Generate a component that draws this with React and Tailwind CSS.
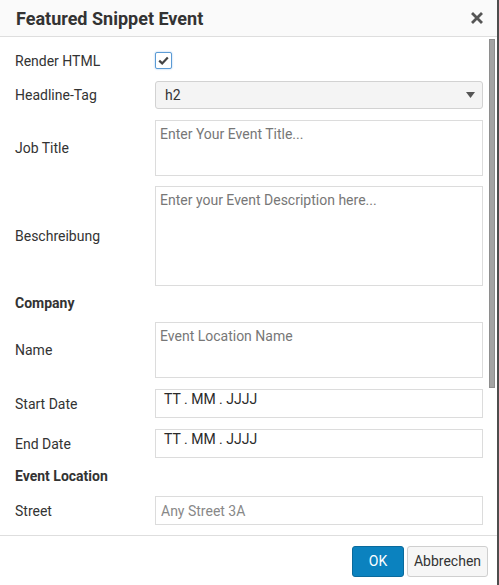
import React from "react";

const FONT = { fontFamily: "Roboto, 'Liberation Sans', sans-serif" };

const Label = ({ children, bold, className = "" }) => (
  <div className={`w-[140px] shrink-0 text-[14px] text-[#333] ${bold ? "font-bold" : ""} ${className}`}>{children}</div>
);

const Row = ({ label, className, labelClass, children }) => (
  <div className={`flex items-center ${className}`}>
    <Label className={labelClass}>{label}</Label>
    {children}
  </div>
);

const textareaCls =
  "w-[328px] resize-none border border-[#dcdcdc] bg-white px-[4px] pt-[4px] text-[14px] leading-[18px] text-[#333] placeholder:text-[#777] outline-none";

const dateCls =
  "h-[29px] w-[328px] border border-[#dcdcdc] bg-white pl-[8px] pt-[1px] text-[14px] leading-[16px] text-[#2a2a2a]";

export default function App() {
  return (
    <div style={FONT} className="flex h-[585px] w-[499px] flex-col overflow-hidden border-r-2 border-[#4d4d4d] bg-white">
      {/* header */}
      <div className="flex h-[37px] shrink-0 items-center justify-between border-b border-[#dedede] bg-[#fafafa] pl-[16px] pr-[14px]">
        <h3 className="text-[18px] font-bold text-[#333]">Featured Snippet Event</h3>
        <svg width="12" height="12" viewBox="0 0 12 12">
          <path d="M2 2 L10 10 M10 2 L2 10" stroke="#555" strokeWidth="2.8" strokeLinecap="square" />
        </svg>
      </div>

      {/* body */}
      <div className="flex h-[498px] shrink-0">
        <div className="flex w-[488px] flex-col pl-[15px]">
          <Row label="Render HTML" labelClass="pt-[2px]" className="mt-[15px] h-[17px]">
            <div className="flex h-[17px] w-[17px] items-center justify-center rounded-[2px] border border-[#5b9bd5] bg-white shadow-[0_0_2px_#9cc3ea]">
              <svg width="11" height="9" viewBox="0 0 11 9">
                <path d="M1.2 4.6 L4.2 7.4 L9.8 1.6" stroke="#444" strokeWidth="2.2" fill="none" />
              </svg>
            </div>
          </Row>

          <Row label="Headline-Tag" className="mt-[12px] h-[28px]">
            <div className="flex h-[28px] w-[328px] items-center justify-between rounded-[3px] border border-[#d2d2d2] bg-[#f4f4f4] pl-[9px] pr-[7px] text-[14px] text-[#333]">
              <span>h2</span>
              <svg width="9" height="6" viewBox="0 0 9 6">
                <path d="M0 0 H9 L4.5 6 Z" fill="#555" />
              </svg>
            </div>
          </Row>

          <Row label="Job Title" className="mt-[11px] h-[56px]">
            <textarea className={`${textareaCls} h-[56px]`} placeholder="Enter Your Event Title..." />
          </Row>

          <Row label="Beschreibung" className="mt-[10px] h-[100px]">
            <textarea className={`${textareaCls} h-[100px]`} placeholder="Enter your Event Description here..." />
          </Row>

          <div className="mt-[7px] flex h-[20px] items-center">
            <Label bold>Company</Label>
          </div>

          <Row label="Name" className="mt-[9px] h-[56px]">
            <textarea className={`${textareaCls} h-[56px]`} placeholder="Event Location Name" />
          </Row>

          <Row label="Start Date" labelClass="pt-[2px]" className="mt-[11px] h-[29px]">
            <div className={dateCls}>TT . MM . JJJJ</div>
          </Row>

          <Row label="End Date" labelClass="pt-[2px]" className="mt-[11px] h-[29px]">
            <div className={dateCls}>TT . MM . JJJJ</div>
          </Row>

          <div className="mt-[8px] flex h-[20px] items-center">
            <Label bold>Event Location</Label>
          </div>

          <Row label="Street" labelClass="pt-[2px]" className="mt-[10px] h-[29px]">
            <input
              className="h-[29px] w-[328px] border border-[#dcdcdc] bg-white px-[5px] text-[14px] text-[#333] placeholder:text-[#888] outline-none"
              placeholder="Any Street 3A"
            />
          </Row>
        </div>

        {/* scrollbar */}
        <div className="ml-[1px] pt-[2px]">
          <div className="h-[349px] w-[6px] border border-[#8e8e8e] bg-[#a3a3a3]" />
        </div>
      </div>

      {/* footer */}
      <div className="flex h-[50px] shrink-0 items-start justify-end gap-[3px] border-t border-[#dedede] pr-[9px] pt-[10px]">
        <button className="h-[31px] w-[52px] rounded-[3px] border border-[#0a6a9c] bg-[#0b82bf] text-[14px] text-white">OK</button>
        <button className="h-[31px] w-[81px] rounded-[3px] border border-[#cfcfcf] bg-[#f6f6f6] text-[14px] text-[#333]">Abbrechen</button>
      </div>
    </div>
  );
}
